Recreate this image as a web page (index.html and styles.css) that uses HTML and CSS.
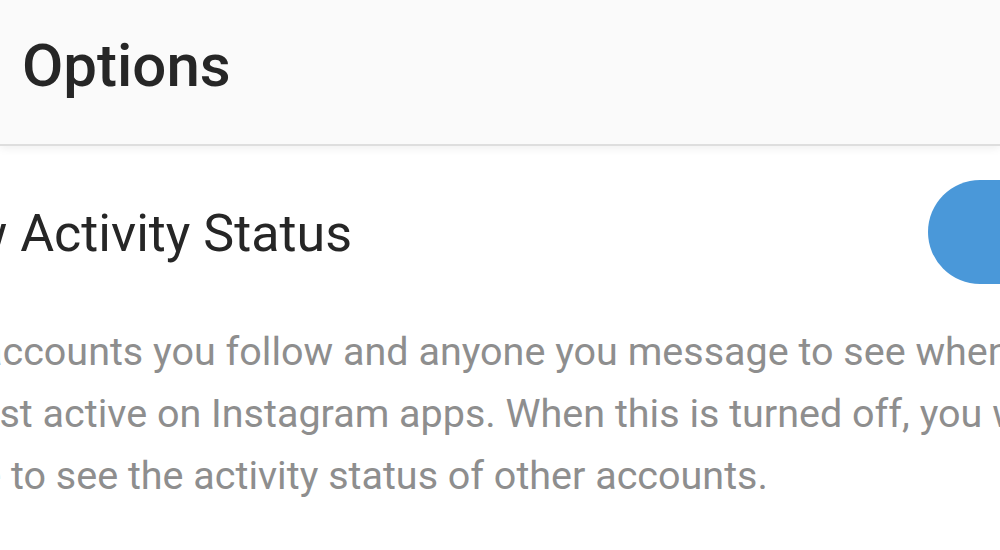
FILE: index.html
```html
<!DOCTYPE html>
<html lang="en">
<head>
    <meta charset="UTF-8">
    <meta name="viewport" content="width=device-width, initial-scale=1.0">
    <title>Options</title>
    <link rel="stylesheet" href="styles.css">
</head>
<body>
    <div class="header">
        <h1 class="title">Options</h1>
    </div>

    <div class="setting">
        <div class="row">
            <h2 class="label">Show Activity Status</h2>
            <div class="toggle on"></div>
        </div>
        <p class="desc">
            Allow accounts you follow and anyone you message to see when you<br>
            were last active on Instagram apps. When this is turned off, you won't<br>
            be able to see the activity status of other accounts.
        </p>
    </div>
</body>
</html>
```

FILE: styles.css
```css
html, body {
    margin: 0;
    padding: 0;
    width: 1000px;
    height: 550px;
    overflow: hidden;
    background-color: #ffffff;
    font-family: Roboto, "Noto Sans", sans-serif;
}
.header {
    height: 144px;
    background-color: #fafafa;
    border-bottom: 2px solid #dedede;
    box-shadow: 0 3px 8px rgba(0, 0, 0, 0.06);
    box-sizing: content-box;
    position: relative;
}
.title {
    margin: 0;
    padding: 36px 0 0 22px;
    font-size: 60px;
    font-weight: 500;
    line-height: 1;
    color: #262626;
}
.setting {
    padding-top: 34px;
}
.row {
    display: flex;
    justify-content: space-between;
    align-items: flex-start;
}
.label {
    margin: 0 0 0 -121px;
    padding-top: 28px;
    font-size: 52px;
    font-weight: 400;
    line-height: 1;
    color: #262626;
    white-space: nowrap;
}
.toggle {
    width: 190px;
    height: 104px;
    margin-right: -118px;
    border-radius: 52px;
    background-color: #c7c7c7;
}
.toggle.on {
    background-color: #4a98d9;
}
.desc {
    margin: 37px 0 0 -126px;
    font-size: 39.5px;
    line-height: 62px;
    color: #8e8e8e;
    white-space: nowrap;
}
```
